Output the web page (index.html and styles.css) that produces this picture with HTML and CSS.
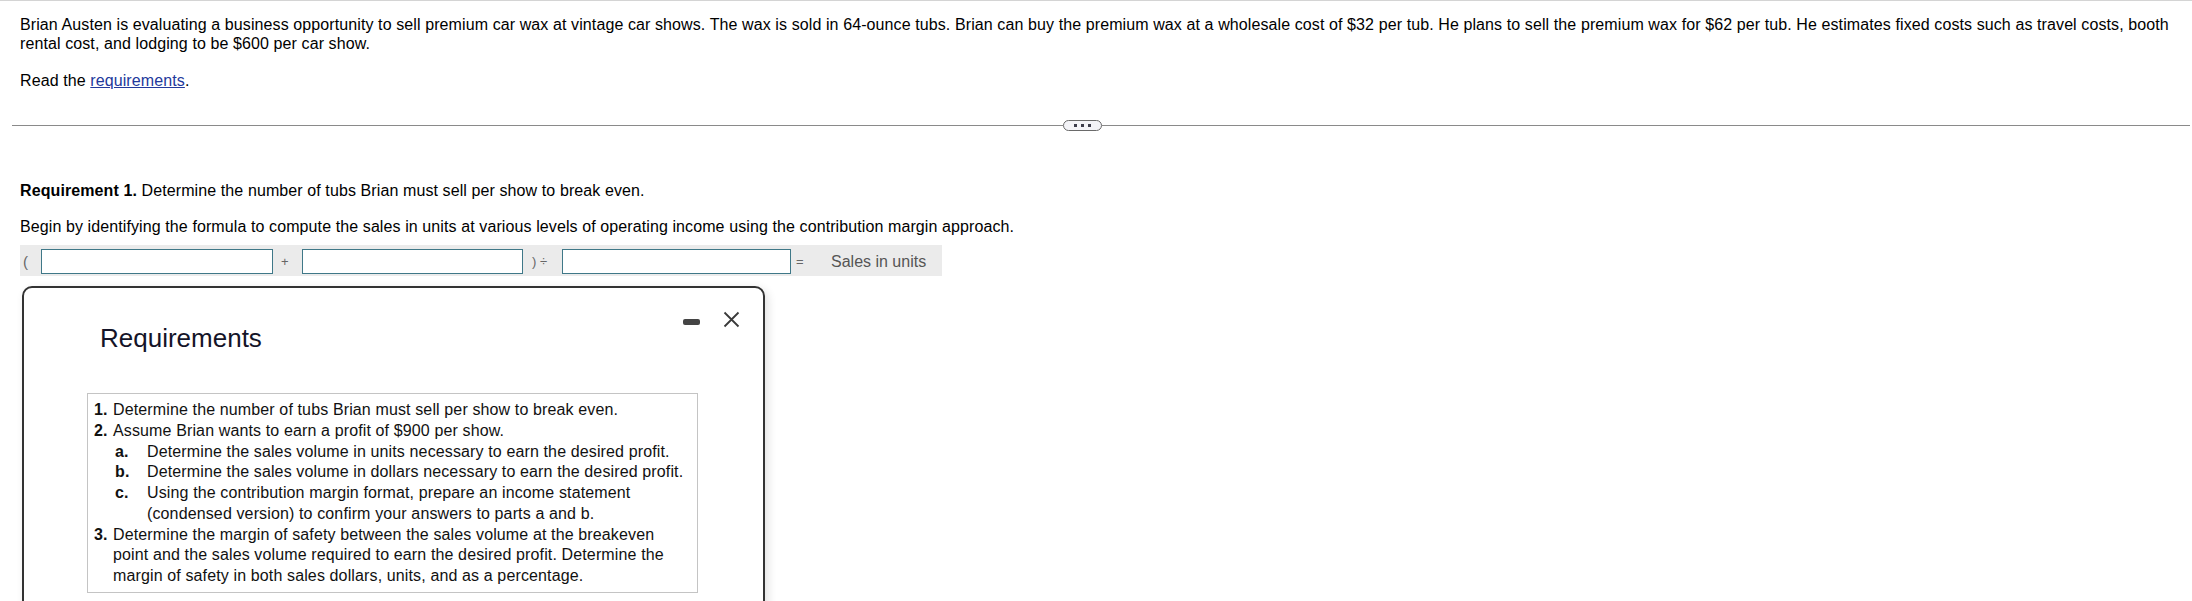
FILE: index.html
```html
<!DOCTYPE html>
<html lang="en">
<head>
<meta charset="utf-8">
<title>Requirements</title>
<link rel="stylesheet" href="styles.css">
</head>
<body>
<div class="page">
  <div class="intro">
    <p class="para">Brian Austen is evaluating a business opportunity to sell premium car wax at vintage car shows. The wax is sold in 64-ounce tubs. Brian can buy the premium wax at a wholesale cost of $32 per tub. He plans to sell the premium wax for $62 per tub. He estimates fixed costs such as travel costs, booth rental cost, and lodging to be $600 per car show.</p>
    <p class="para read">Read the <a class="link" href="#">requirements</a>.</p>
  </div>

  <div class="divider">
    <div class="seg seg-left"></div>
    <div class="pill"><span class="dot"></span><span class="dot"></span><span class="dot"></span></div>
    <div class="seg seg-right"></div>
  </div>

  <div class="work">
    <p class="req-title"><b>Requirement 1.</b> Determine the number of tubs Brian must sell per show to break even.</p>
    <p class="begin">Begin by identifying the formula to compute the sales in units at various levels of operating income using the contribution margin approach.</p>

    <div class="formula">
      <span class="op op-open">(</span>
      <input class="field field-1" type="text">
      <span class="op op-plus">+</span>
      <input class="field field-2" type="text">
      <span class="op op-div">) ÷</span>
      <input class="field field-3" type="text">
      <span class="op op-eq">=</span>
      <span class="result">Sales in units</span>
    </div>

    <div class="modal">
      <div class="modal-head">
        <h2 class="modal-title">Requirements</h2>
        <div class="modal-tools">
          <span class="minimize"></span>
          <svg class="close" width="17" height="17" viewBox="0 0 17 17"><path d="M1.5 1.5 L15.5 15.5 M15.5 1.5 L1.5 15.5" stroke="#3a3a3a" stroke-width="1.8" fill="none"/></svg>
        </div>
      </div>
      <div class="req-box">
        <div class="item"><span class="num">1.</span><span class="txt">Determine the number of tubs Brian must sell per show to break even.</span></div>
        <div class="item"><span class="num">2.</span><span class="txt">Assume Brian wants to earn a profit of $900 per show.</span></div>
        <div class="item sub"><span class="num sub-num">a.</span><span class="txt">Determine the sales volume in units necessary to earn the desired profit.</span></div>
        <div class="item sub"><span class="num sub-num">b.</span><span class="txt">Determine the sales volume in dollars necessary to earn the desired profit.</span></div>
        <div class="item sub"><span class="num sub-num">c.</span><span class="txt">Using the contribution margin format, prepare an income statement (condensed version) to confirm your answers to parts a and b.</span></div>
        <div class="item"><span class="num">3.</span><span class="txt">Determine the margin of safety between the sales volume at the breakeven point and the sales volume required to earn the desired profit. Determine the margin of safety in both sales dollars, units, and as a percentage.</span></div>
      </div>
    </div>
  </div>
</div>
</body>
</html>
```

FILE: styles.css
```css
html, body {
  margin: 0;
  padding: 0;
  background: #ffffff;
  overflow: hidden;
}

body {
  font-family: "Liberation Sans", Arial, sans-serif;
  font-size: 16px;
  line-height: 19.2px;
  letter-spacing: 0.1px;
  color: #000;
}

.page {
  border-top: 1px solid #d4d4d4;
  height: 600px;
}

.intro {
  padding: 14px 20px 0 20px;
}

.para {
  margin: 0;
}

.read {
  margin-top: 18px;
}

.link {
  color: #23399b;
  text-decoration: underline;
}

.divider {
  display: flex;
  align-items: center;
  margin: 29px 2px 0 12px;
  height: 11px;
}

.seg {
  height: 1px;
  background: #8a8a8a;
}

.seg-left {
  width: 1051px;
}

.seg-right {
  flex: 1;
}

.pill {
  box-sizing: border-box;
  width: 39px;
  height: 11px;
  border: 1px solid #6a6a6a;
  border-radius: 6px;
  background: #f3f3f7;
  display: flex;
  align-items: center;
  justify-content: center;
  gap: 4px;
}

.dot {
  width: 3px;
  height: 3px;
  background: #3c3c4a;
}

.work {
  padding: 0 20px;
}

.req-title {
  margin: 50px 0 0 0;
}

.begin {
  margin: 17px 0 0 0;
}

.formula {
  display: inline-flex;
  align-items: center;
  margin-top: 9px;
  height: 31px;
  background: #ebebeb;
  color: #666;
  letter-spacing: 0;
}

.op {
  font-size: 13px;
  box-sizing: border-box;
  padding-top: 3px;
}

.op-open {
  width: 21px;
  padding-left: 3px;
  font-size: 15px;
}

.op-plus {
  width: 29px;
  padding-left: 8px;
}

.op-div {
  width: 39px;
  padding-left: 9px;
}

.op-eq {
  width: 40px;
  padding-left: 5px;
}

.field {
  box-sizing: border-box;
  height: 25px;
  margin: 2px 0 0 0;
  padding: 0 4px;
  border: 1px solid #3f7888;
  background: #fff;
  font-family: inherit;
  font-size: 14px;
  outline: none;
}

.field-1 { width: 232px; }
.field-2 { width: 221px; }
.field-3 { width: 229px; }

.result {
  font-size: 16px;
  color: #555;
  padding: 3px 16px 0 0;
}

.modal {
  box-sizing: border-box;
  width: 743px;
  height: 420px;
  margin: 10px 0 0 2px;
  border: 2px solid #333;
  border-radius: 10px;
  background: #fff;
  box-shadow: 3px 3px 10px rgba(0, 0, 0, 0.12);
  letter-spacing: 0;
}

.modal-head {
  display: flex;
  align-items: flex-start;
  padding: 23px 23px 0 76px;
}

.modal-title {
  flex: 1;
  margin: 12px 0 0 0;
  font-size: 26px;
  line-height: 30px;
  font-weight: normal;
  color: #141428;
}

.modal-tools {
  display: flex;
  align-items: center;
  gap: 23px;
  height: 17px;
}

.minimize {
  display: block;
  width: 17px;
  height: 6px;
  margin-top: 5px;
  border-radius: 2px;
  background: #444;
}

.close {
  display: block;
}

.req-box {
  box-sizing: border-box;
  width: 611px;
  margin: 40px 0 0 63px;
  padding: 6px 9px 5px 6px;
  border: 1px solid #c4c4c4;
  line-height: 20.75px;
  letter-spacing: 0.13px;
  color: #111;
}

.item {
  display: flex;
}

.num {
  flex: none;
  width: 19px;
  font-weight: bold;
}

.sub {
  padding-left: 21px;
}

.sub-num {
  width: 32px;
}

.txt {
  flex: 1;
}
```
